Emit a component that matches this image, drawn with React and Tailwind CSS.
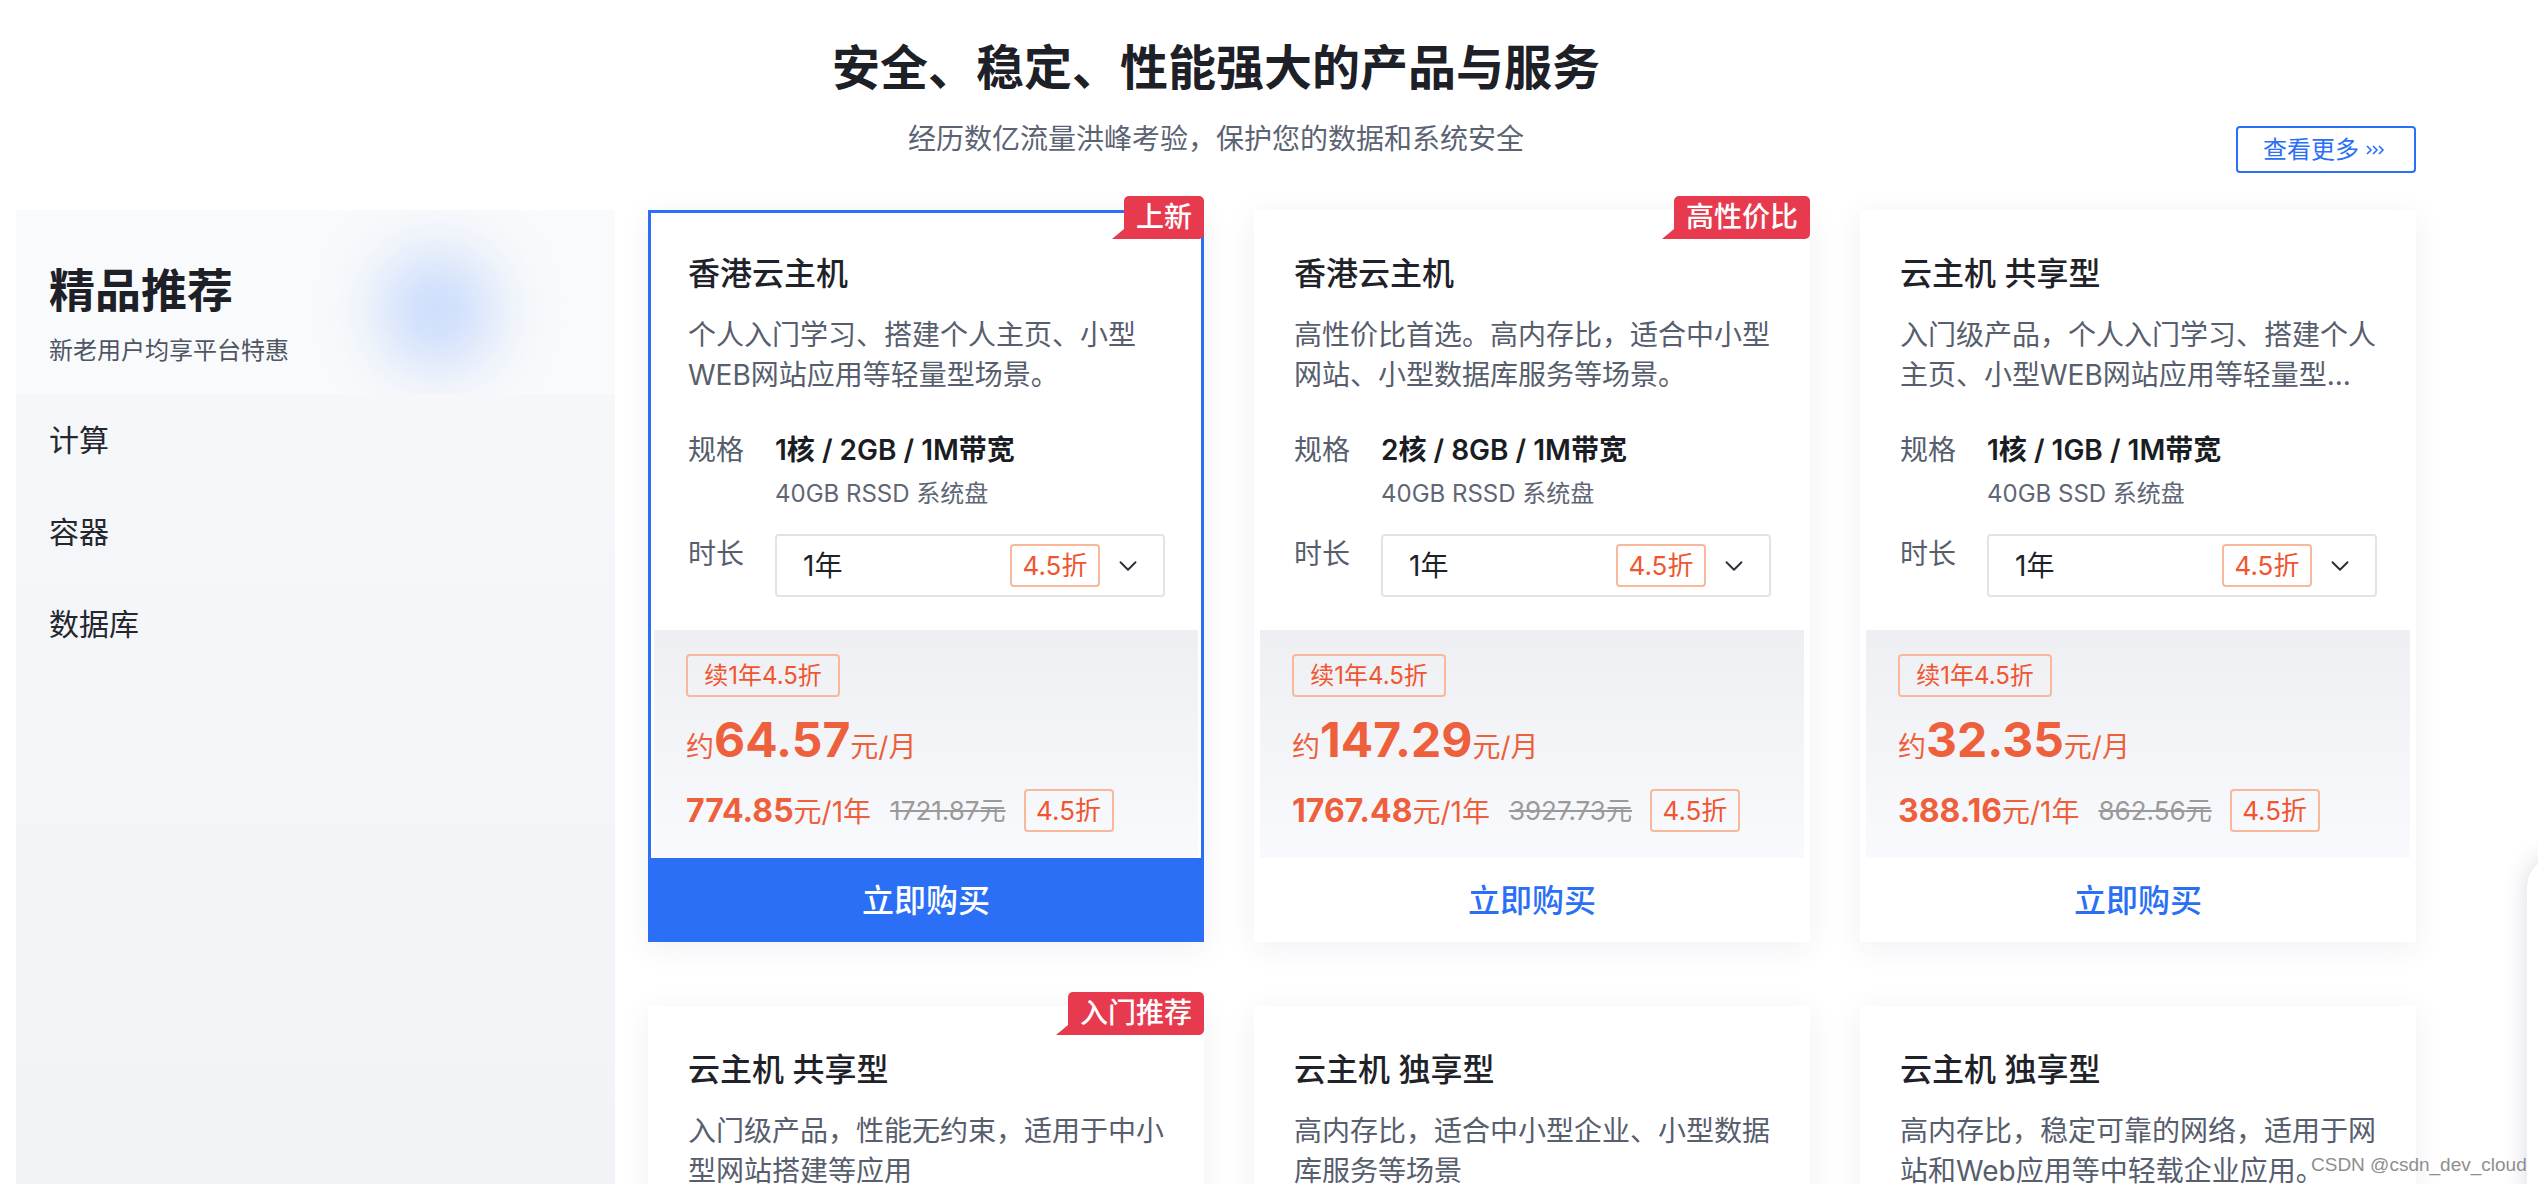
import { ChevronDown } from "lucide-react";

const products = [
    {
        title: "香港云主机",
        badge: "上新",
        desc: "个人入门学习、搭建个人主页、小型WEB网站应用等轻量型场景。",
        spec: "1核 / 2GB / 1M带宽",
        disk: "40GB RSSD 系统盘",
        monthly: "64.57",
        yearly: "774.85",
        original: "1721.87",
        active: true,
    },
    {
        title: "香港云主机",
        badge: "高性价比",
        desc: "高性价比首选。高内存比，适合中小型网站、小型数据库服务等场景。",
        spec: "2核 / 8GB / 1M带宽",
        disk: "40GB RSSD 系统盘",
        monthly: "147.29",
        yearly: "1767.48",
        original: "3927.73",
    },
    {
        title: "云主机 共享型",
        desc: "入门级产品，个人入门学习、搭建个人主页、小型WEB网站应用等轻量型...",
        spec: "1核 / 1GB / 1M带宽",
        disk: "40GB SSD 系统盘",
        monthly: "32.35",
        yearly: "388.16",
        original: "862.56",
    },
    {
        title: "云主机 共享型",
        badge: "入门推荐",
        desc: "入门级产品，性能无约束，适用于中小型网站搭建等应用",
        spec: "2核 / 2GB / 1M带宽",
        disk: "40GB SSD 系统盘",
        monthly: "45.60",
        yearly: "547.20",
        original: "1216.00",
    },
    {
        title: "云主机 独享型",
        desc: "高内存比，适合中小型企业、小型数据库服务等场景",
        spec: "2核 / 8GB / 1M带宽",
        disk: "50GB SSD 系统盘",
        monthly: "158.40",
        yearly: "1900.80",
        original: "4224.00",
    },
    {
        title: "云主机 独享型",
        desc: "高内存比，稳定可靠的网络，适用于网站和Web应用等中轻载企业应用。",
        spec: "4核 / 16GB / 2M带宽",
        disk: "50GB SSD 系统盘",
        monthly: "289.80",
        yearly: "3477.60",
        original: "7728.00",
    },
];

const menu = ["计算", "容器", "数据库"];

function Badge({ text }) {
    return (
        <div className="absolute top-[-17px] right-[-3px] flex">
            <svg className="self-end" width="12" height="10" viewBox="0 0 12 10">
                <path d="M12 0 L12 10 L0 10 Z" fill="#e83a4e" />
            </svg>
            <div className="h-[43px] px-[12px] bg-[#e83a4e] rounded-t-[5px] rounded-br-[5px] text-white text-[28px] leading-[43px] font-medium">
                {text}
            </div>
        </div>
    );
}

function Tag({ children, className = "" }) {
    return (
        <span
            className={`inline-flex h-[43px] items-center justify-center border-2 border-[#f8b899] rounded-[4px] text-[#f0552f] ${className}`}
        >
            {children}
        </span>
    );
}

function ProductCard({ p }) {
    return (
        <div
            className={`relative bg-white border-[3px] shadow-[0_6px_30px_rgba(31,45,90,0.07)] ${
                p.active ? "border-[#2a6ff6]" : "border-white"
            }`}
        >
            {p.badge && <Badge text={p.badge} />}

            {/* info */}
            <div className="pl-[37px] pr-[33px] pt-[37px]">
                <h3 className="text-[32px] leading-[48px] font-medium text-[#1f2329]">{p.title}</h3>
                <p className="mt-[17px] h-[80px] text-[28px] leading-[40px] text-[#575e6d] line-clamp-2">
                    {p.desc}
                </p>
                <div className="mt-[35px] flex">
                    <span className="w-[87px] shrink-0 text-[28px] leading-[40px] text-[#575e6d]">规格</span>
                    <div>
                        <p className="text-[28px] leading-[40px] font-semibold text-[#1a1d23]">{p.spec}</p>
                        <p className="mt-[6px] text-[24px] leading-[36px] text-[#5f6675]">{p.disk}</p>
                    </div>
                </div>
                <div className="mt-[22px] flex items-start">
                    <span className="w-[87px] shrink-0 text-[28px] leading-[40px] text-[#575e6d]">时长</span>
                    <div className="w-[390px] h-[63px] border-2 border-[#e1e3e8] rounded-[4px] flex items-center pl-[26px] pr-[20px]">
                        <span className="flex-1 text-[28px] text-[#1f2329]">1年</span>
                        <Tag className="w-[90px] h-[42px] text-[26px]">4.5折</Tag>
                        <ChevronDown className="ml-[13px]" size={30} strokeWidth={1.5} color="#2b2f36" />
                    </div>
                </div>
            </div>

            {/* price */}
            <div className="mx-[3px] mt-[33px] h-[228px] bg-linear-to-b from-[#eeeff3] to-[#f9fafd] px-[32px] pt-[24px]">
                <Tag className="w-[154px] text-[24px]">续1年4.5折</Tag>
                <div className="mt-[15px] h-[56px] flex items-baseline text-[#ee5f3c]">
                    <span className="text-[28px]">约</span>
                    <span className="text-[48px] leading-[56px] font-bold">{p.monthly}</span>
                    <span className="text-[28px]">元/月</span>
                </div>
                <div className="mt-[21px] h-[43px] flex items-center">
                    <span className="text-[#ee5f3c]">
                        <span className="text-[32px] font-bold">{p.yearly}</span>
                        <span className="text-[28px]">元/1年</span>
                    </span>
                    <span className="ml-[19px] text-[26px] text-[#9a9a9a] line-through">{p.original}元</span>
                    <Tag className="ml-[18px] w-[90px] text-[26px]">4.5折</Tag>
                </div>
            </div>

            <button
                className={`w-full h-[81px] pt-[5px] flex items-center justify-center text-[32px] font-medium ${
                    p.active ? "bg-[#2a6ff6] text-white" : "bg-white text-[#2a6ff6]"
                }`}
            >
                立即购买
            </button>
        </div>
    );
}

export default function App() {
    return (
        <div className="relative h-[1184px] overflow-hidden bg-white font-[Inter,'Noto_Sans_CJK_SC',sans-serif]">
            <div className="pl-[16px] w-[2416px]">
                {/* Header */}
                <header className="h-[210px] grid grid-cols-[1fr_auto_1fr]">
                    <div />
                    <div className="text-center pt-[36px]">
                        <h1 className="text-[48px] leading-[64px] font-semibold text-[#1d2026]">
                            安全、稳定、性能强大的产品与服务
                        </h1>
                        <p className="mt-[19px] text-[28px] leading-[40px] text-[#5c6373]">
                            经历数亿流量洪峰考验，保护您的数据和系统安全
                        </p>
                    </div>
                    <div className="flex justify-end items-start pt-[126px]">
                        <button className="w-[180px] h-[47px] border-2 border-[#2a6ff6] rounded-[4px] flex items-center pl-[25px] text-[24px] text-[#2a6ff6]">
                            查看更多
                            <svg className="ml-[6px]" width="22" height="14" viewBox="0 0 22 14" fill="none" stroke="#2a6ff6" strokeWidth="1.6">
                                <path d="M2 3 L6 7 L2 11" />
                                <path d="M8 3 L12 7 L8 11" />
                                <path d="M14 3 L18 7 L14 11" />
                            </svg>
                        </button>
                    </div>
                </header>

                <div className="flex gap-[33px]">
                    {/* Sidebar */}
                    <aside className="w-[599px] shrink-0 bg-linear-to-b from-[#f7f8fa] to-[#eef0f5]">
                        <div className="relative h-[184px] overflow-hidden bg-[#f9fafb] pl-[33px] pt-[48px]">
                            <div className="absolute left-[366px] top-[45px] w-[110px] h-[110px] rounded-full bg-[#c2d6fc] blur-[34px]" />
                            <h2 className="relative text-[46px] leading-[64px] font-semibold text-[#1d2026]">精品推荐</h2>
                            <p className="relative mt-[11px] text-[24px] leading-[36px] text-[#4e5563]">新老用户均享平台特惠</p>
                        </div>
                        <ul>
                            {menu.map((m) => (
                                <li key={m} className="h-[92px] flex items-center pl-[33px] text-[30px] text-[#24272e]">
                                    {m}
                                </li>
                            ))}
                        </ul>
                    </aside>

                    {/* Products */}
                    <div className="w-[1768px] grid grid-cols-3 gap-x-[50px] gap-y-[64px]">
                        {products.map((p, i) => (
                            <ProductCard key={i} p={p} />
                        ))}
                    </div>
                </div>
            </div>

            {/* floating side tool, cut by the window */}
            <div className="absolute left-[2527px] top-[857px] w-[90px] h-[420px] rounded-[30px] bg-white shadow-[0_0_24px_rgba(40,50,90,0.18)]" />

            {/* watermark */}
            <div className="absolute left-[2311px] top-[1150px] whitespace-nowrap text-[19px] leading-[30px] text-[#8e8e8e] font-['Liberation_Sans',sans-serif] [text-shadow:0_0_3px_#fff]">
                CSDN @csdn_dev_cloud
            </div>
        </div>
    );
}
